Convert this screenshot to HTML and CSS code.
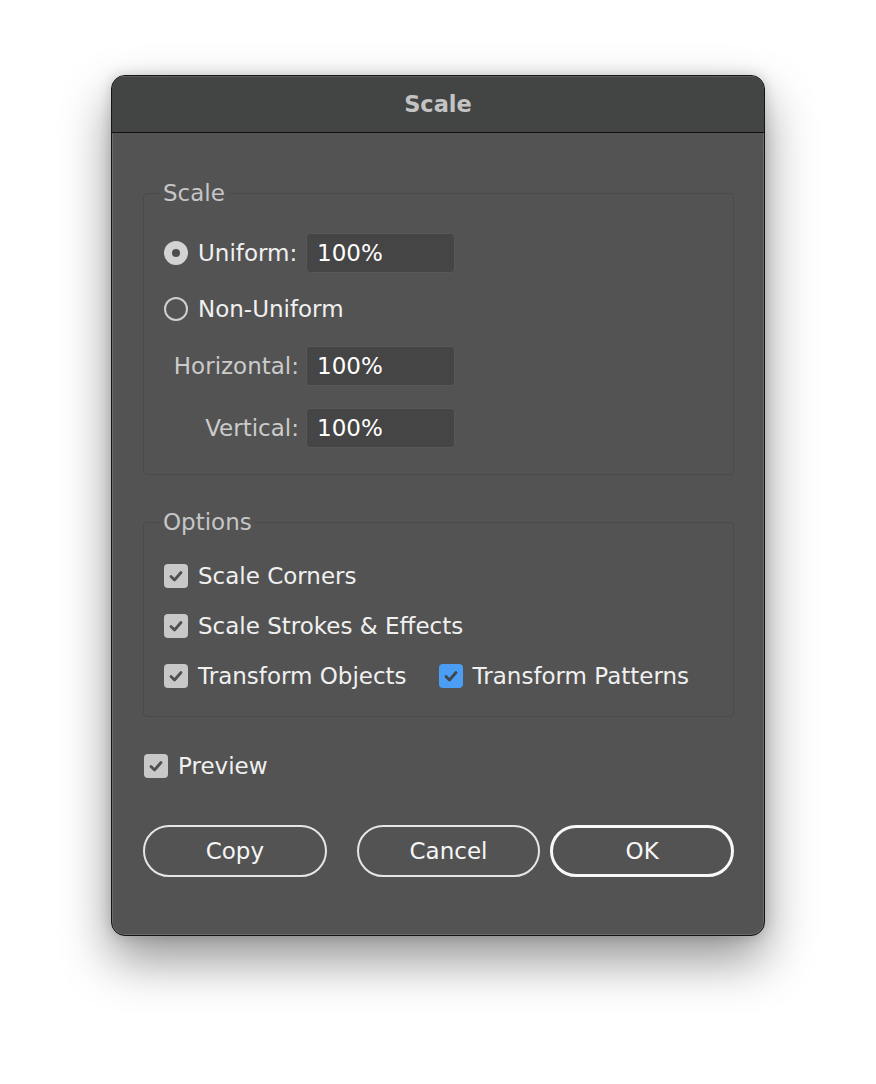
FILE: index.html
```html
<!DOCTYPE html>
<html>
<head>
<meta charset="utf-8">
<link rel="stylesheet" href="styles.css">
</head>
<body>
<div class="dialog">
  <div class="titlebar">Scale</div>
  <div class="content">
    <fieldset class="group group-scale">
      <legend>Scale</legend>
      <div class="row">
        <span class="radio on"></span>
        <span class="label fixed">Uniform:</span>
        <span class="field">100%</span>
      </div>
      <div class="row row-non">
        <span class="radio"></span>
        <span class="label">Non-Uniform</span>
      </div>
      <div class="row row-sub">
        <span class="sublabel">Horizontal:</span>
        <span class="field">100%</span>
      </div>
      <div class="row row-sub">
        <span class="sublabel">Vertical:</span>
        <span class="field">100%</span>
      </div>
    </fieldset>
    <fieldset class="group group-options">
      <legend>Options</legend>
      <div class="crow"><span class="check"><svg viewBox="0 0 24 24"><path d="M7 12.5 L10.5 16 L17 8.5" /></svg></span><span class="label">Scale Corners</span></div>
      <div class="crow"><span class="check"><svg viewBox="0 0 24 24"><path d="M7 12.5 L10.5 16 L17 8.5" /></svg></span><span class="label">Scale Strokes &amp; Effects</span></div>
      <div class="crow">
        <span class="check"><svg viewBox="0 0 24 24"><path d="M7 12.5 L10.5 16 L17 8.5" /></svg></span><span class="label">Transform Objects</span>
        <span class="check blue"><svg viewBox="0 0 24 24"><path d="M7 12.5 L10.5 16 L17 8.5" /></svg></span><span class="label">Transform Patterns</span>
      </div>
    </fieldset>
    <div class="crow preview"><span class="check"><svg viewBox="0 0 24 24"><path d="M7 12.5 L10.5 16 L17 8.5" /></svg></span><span class="label">Preview</span></div>
    <div class="buttons">
      <button class="btn">Copy</button>
      <button class="btn">Cancel</button>
      <button class="btn default">OK</button>
    </div>
  </div>
</div>
</body>
</html>
```
FILE: styles.css
```css
html, body {
  margin: 0;
  padding: 0;
  background: #ffffff;
}
body {
  width: 876px;
  height: 1084px;
  padding: 75px 0 0 111px;
  box-sizing: border-box;
  font-family: "DejaVu Sans", "Liberation Sans", sans-serif;
  font-size: 23px;
  overflow: hidden;
}
.dialog {
  width: 654px;
  height: 861px;
  box-sizing: border-box;
  background: #535353;
  border: 1px solid #151515;
  border-radius: 14px;
  overflow: hidden;
  box-shadow: inset 0 0 0 1px #6b6b6b, 0 24px 50px rgba(0, 0, 0, 0.42), 0 0 14px rgba(0, 0, 0, 0.18);
  display: flex;
  flex-direction: column;
}
.titlebar {
  height: 56px;
  background: #434544;
  border-bottom: 1px solid #121212;
  box-shadow: inset 0 1px 0 #5c5e5d;
  color: #c3c3c3;
  font-weight: bold;
  font-size: 22.5px;
  display: flex;
  align-items: center;
  justify-content: center;
}
.content {
  padding: 0 30px 0 31px;
  display: flex;
  flex-direction: column;
}
.group {
  margin: 0;
  border: 1px solid #4a4a4a;
  border-radius: 4px;
  padding: 0 0 0 20px;
  min-width: 0;
}
.group legend {
  color: #c6c6c6;
  padding: 0 3px;
  margin-left: -4px;
  line-height: 26px;
}
.group-scale {
  margin-top: 47px;
  height: 295px;
  box-sizing: border-box;
  padding-top: 27px;
}
.row {
  display: flex;
  align-items: center;
  height: 40px;
}
.row-non {
  margin-top: 16px;
}
.row-sub {
  margin-top: 22px;
}
.row-non + .row-sub {
  margin-top: 17px;
}
.radio {
  width: 20px;
  height: 20px;
  border-radius: 50%;
  border: 2px solid #cfcfcf;
  box-sizing: content-box;
  margin-right: 10px;
  flex: none;
}
.radio.on {
  background: #d3d3d3;
  border-color: #d3d3d3;
  position: relative;
}
.radio.on::after {
  content: "";
  position: absolute;
  left: 6px;
  top: 6px;
  width: 8px;
  height: 8px;
  border-radius: 50%;
  background: #4d4d4d;
}
.label {
  color: #f0f0f0;
  white-space: nowrap;
}
.label.fixed {
  width: 101px;
  margin-right: 7px;
  flex: none;
}
.sublabel {
  width: 135px;
  text-align: right;
  color: #cbcbcb;
  margin-right: 7px;
  white-space: nowrap;
}
.field {
  width: 149px;
  height: 40px;
  box-sizing: border-box;
  background: #454545;
  border: 1.5px solid #585858;
  border-radius: 4px;
  color: #ffffff;
  padding-left: 10px;
  display: flex;
  align-items: center;
}
.group-options {
  margin-top: 34px;
  height: 208px;
  box-sizing: border-box;
  padding-top: 26px;
}
.crow {
  display: flex;
  align-items: center;
  height: 30px;
  margin-bottom: 20px;
}
.check {
  width: 24px;
  height: 24px;
  border-radius: 4px;
  background: #c8c8c8;
  flex: none;
  margin-right: 10px;
  display: flex;
  align-items: center;
  justify-content: center;
}
.check svg {
  width: 24px;
  height: 24px;
  fill: none;
  stroke: #505050;
  stroke-width: 2.8;
  stroke-linecap: round;
  stroke-linejoin: round;
}
.check.blue {
  background: #4b9ef3;
  margin-left: 32px;
}
.check.blue svg {
  stroke: #3e4650;
}
.preview {
  margin-top: 34px;
  margin-left: 1px;
  margin-bottom: 0;
}
.buttons {
  margin-top: 44px;
  display: flex;
  gap: 30px;
}
.btn {
  width: 184px;
  height: 52px;
  border-radius: 26px;
  border: 2px solid #e6e6e6;
  background: transparent;
  color: #f6f6f6;
  font-family: inherit;
  font-size: 23px;
  padding: 0;
}
.btn.default {
  border-width: 3px;
  border-color: #f8f8f8;
  margin-left: -20px;
}
```
